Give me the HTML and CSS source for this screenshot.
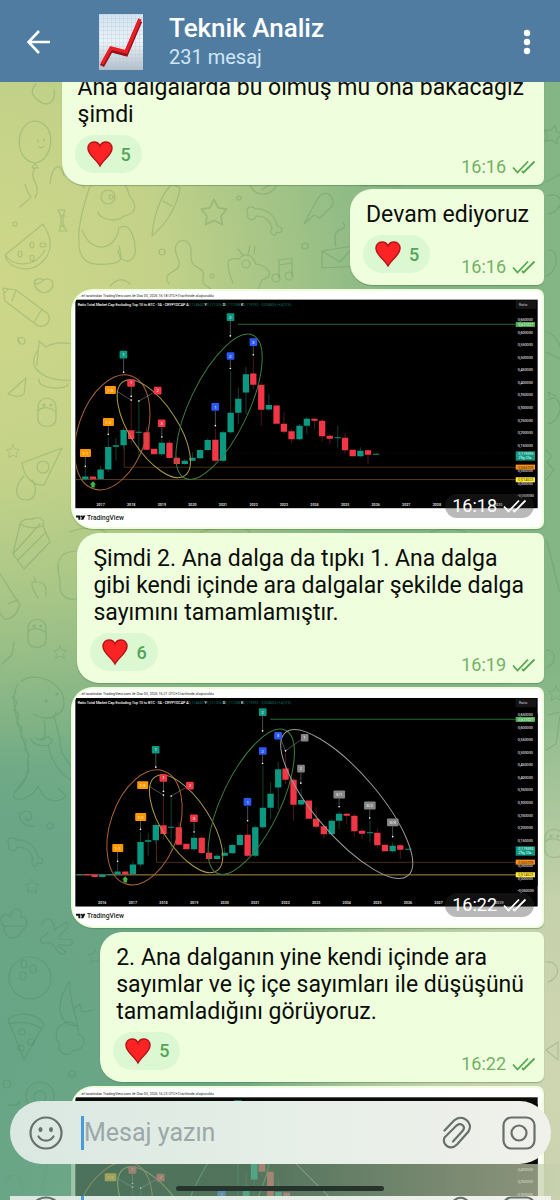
FILE: index.html
```html
<!DOCTYPE html>
<html lang="tr">
<head>
<meta charset="utf-8">
<meta name="viewport" content="width=device-width, initial-scale=1">
<title>Teknik Analiz</title>
<link rel="stylesheet" href="styles.css">
</head>
<body>
<svg class="defs" width="0" height="0" aria-hidden="true">
  <defs>
    <linearGradient id="paper" x1="0" y1="0" x2="0" y2="1"><stop offset="0" stop-color="#d3e3f0"/><stop offset=".5" stop-color="#edf3f5"/><stop offset="1" stop-color="#b4bfc8"/></linearGradient>
    <pattern id="grid" width="4" height="4" patternUnits="userSpaceOnUse"><path d="M0 0H4M0 0V4" stroke="#a9c6dc" stroke-width=".6" fill="none"/></pattern>
    <clipPath id="panel"><rect x="16" y="39" width="1390" height="627"/></clipPath>
    <symbol id="heart" viewBox="0 0 26 26"><path d="M13 25C10 19 1 14 1 7.500C1 3.500 3.500 1 7 1C10 1 12 2.500 13 5C14 2.500 16 1 19 1C22.500 1 25 3.500 25 7.500C25 14 16 19 13 25Z" fill="#fb2323" stroke="#b31317" stroke-width="1.400"/></symbol>
    <symbol id="checks" viewBox="0 0 24 14"><path d="M1 7.500L5.500 12.500L16 1.500M10 11L11.500 12.500L22.500 1.500" fill="none" stroke="currentColor" stroke-width="1.800"/></symbol>
    <symbol id="smile" viewBox="0 0 34 34"><circle cx="17" cy="17" r="15.500" fill="none" stroke="currentColor" stroke-width="2.200"/><ellipse cx="11.500" cy="13.500" rx="2" ry="2.500" fill="currentColor"/><ellipse cx="22" cy="13.500" rx="2" ry="2.500" fill="currentColor"/><path d="M9.500 20.500C13 26 21 26 24.500 20.500" fill="none" stroke="currentColor" stroke-width="2.200" stroke-linecap="round"/></symbol>
    <symbol id="clip" viewBox="0 0 30 34"><path d="M2.500 14.500L12 4.500C20-2.500 32 6 26.500 15.500L15 28.500C8.500 35 -.5 29 2.500 21.500L14.500 9.500C20 6 24 11 20.500 15L11 25.500" fill="none" stroke="currentColor" stroke-width="2.200" stroke-linecap="round"/></symbol>
    <symbol id="camera" viewBox="0 0 34 34"><rect x="1.500" y="1.500" width="31" height="31" rx="8" fill="none" stroke="currentColor" stroke-width="2.200"/><circle cx="17" cy="17" r="7.500" fill="none" stroke="currentColor" stroke-width="2.200"/></symbol>

    <g id="brand">
      <path d="M18 690H31V703H25V696H18ZM38 690H46L40 703H33Z" fill="#111"/><circle cx="34.500" cy="693" r="3" fill="#111"/>
      <text x="51" y="703" font-size="20" font-weight="500" fill="#222">TradingView</text>
    </g>
    <g id="symbolline" font-size="11">
      <text x="23" y="59" fill="#e8e8e8" stroke="#e8e8e8" stroke-width=".3">Ratio Total Market Cap Excluding Top 10 to BTC · 3A · CRYPTOCAP <tspan fill="#fff">A</tspan><tspan fill="#0c7465" stroke="none">0,114840</tspan> Y<tspan fill="#0c7465" stroke="none">0,121306</tspan> D<tspan fill="#0c7465" stroke="none">0,111208</tspan> K<tspan fill="#0c7465" stroke="none">0,119393 −0,004606 (+4,01%)</tspan></text>
      <rect x="1340" y="43" width="62" height="26" fill="#151515"/><text x="1350" y="60" fill="#ccc">Ratio</text>
    </g>
    <g id="scale" font-size="11" fill="#d5d5d5" stroke="#d5d5d5" stroke-width=".3">
      <text x="1346" y="104">0,650000</text><text x="1346" y="143">0,600000</text><text x="1346" y="181">0,550000</text><text x="1346" y="218">0,500000</text><text x="1346" y="257">0,450000</text><text x="1346" y="294">0,400000</text><text x="1346" y="332">0,350000</text><text x="1346" y="370">0,300000</text><text x="1346" y="408">0,250000</text><text x="1346" y="445">0,200000</text><text x="1346" y="483">0,150000</text><text x="1346" y="559">0,050000</text><text x="1346" y="597">0,000000</text><text x="1346" y="635">-0,050000</text>
      <g stroke="none" fill="#fff">
        <rect x="1340" y="108" width="58" height="15" fill="#4caf50"/><text x="1348" y="119">0,631027</text>
        <rect x="1340" y="497" width="58" height="28" fill="#0b9981"/><text x="1348" y="508">0,119393</text><text x="1348" y="521">29g 23s</text>
        <rect x="1340" y="537" width="58" height="15" fill="#f6921e"/><text x="1348" y="549" fill="#3a2000">0,065709</text>
        <rect x="1340" y="575" width="58" height="15" fill="#ffe93b"/><text x="1348" y="587" fill="#4a4300">0,014623</text>
      </g>
    </g>
    <g id="waves">
      <path d="M163 470V545H1340" stroke="#6e431d" stroke-width="2" fill="none"/>
      <path d="M18 582H1340" stroke="#80652f" stroke-width="2"/>
      <path d="M505 115H1340" stroke="#286733" stroke-width="3"/>
      <path d="M18 503H1340" stroke="#173b35" stroke-width="1" stroke-dasharray="2 3"/>
      <path d="M46 545V585M92 540V580M115 455V560M138 458V525M161 425V490M207 350V515M276 460V510M345 520V538M368 500V525M391 490V520M414 458V495M460 435V530M483 255V445M506 305V415M529 243V385M598 325V375M690 415V465M712 393V445M805 420V485M873 485V515" stroke="#1b5f51" stroke-width="2"/>
      <path d="M184 345V475M230 425V495M299 465V520M321 510V540M437 430V530M551 215V310M575 290V420M643 380V445M666 430V473M735 395V430M758 400V468M781 445V475M827 443V503M896 490V535" stroke="#73222d" stroke-width="2"/>
      <path d="M46 573V581M92 552V580M115 484V552M138 479V483M161 433V479M207 438V441M276 471V506M345 525V535M368 516V525M391 493V518M414 463V493M460 440V525M483 381V440M506 339V381M529 265V320M598 358V371M690 420V461M712 399V420M805 455V458M873 495V512M920 504V507" stroke="#0b9981" stroke-width="19"/>
      <path d="M69 573V581M184 434V460M230 440V492M253 489V506M299 471V517M321 516V535M437 462V525M551 263V297M575 297V372M621 359V414M643 414V438M666 437V461M735 399V405M758 405V452M781 450V459M827 456V494M850 492V512M896 494V507" stroke="#f23645" stroke-width="19"/>
      <g fill="none" stroke-width="3">
        <ellipse cx="127" cy="440" rx="103" ry="179" transform="rotate(18.700 127 440)" stroke="#a96536"/>
        <ellipse cx="252" cy="429" rx="72" ry="169" transform="rotate(-33 252 429)" stroke="#ad9b49"/>
        <ellipse cx="448" cy="363" rx="88" ry="238" transform="rotate(25.500 448 363)" stroke="#3d7d42"/>
      </g>
      <path d="M161 218V259M482 105V150M184 300V332M140 316L184 343M252 320L207 346M115 420V446M46 514V542M276 425V454M437 376V420M482 222V248" stroke="#999" stroke-width="1.500" fill="none"/>
      <g fill="#fff"><circle cx="161" cy="259" r="2.500"/><circle cx="482" cy="150" r="2.500"/><circle cx="184" cy="332" r="2.500"/><circle cx="184" cy="343" r="2.500"/><circle cx="207" cy="346" r="2.500"/><circle cx="115" cy="446" r="2.500"/><circle cx="46" cy="542" r="2.500"/><circle cx="276" cy="454" r="2.500"/><circle cx="437" cy="420" r="2.500"/><circle cx="482" cy="248" r="2.500"/></g>
      <path d="M69 587L78 597H74V606H64V597H60Z" fill="#43b94a"/>
      <g fill="#0b9981"><rect x="149" y="195" width="23" height="23" rx="3"/><rect x="471" y="82" width="23" height="23" rx="3"/></g>
      <g fill="#ff9800"><rect x="105" y="301" width="33" height="24" rx="3"/><rect x="99" y="397" width="33" height="24" rx="3"/><rect x="30" y="490" width="33" height="24" rx="3"/></g>
      <g fill="#f23645"><rect x="172" y="280" width="23" height="23" rx="3"/><rect x="252" y="303" width="23" height="23" rx="3"/><rect x="264" y="401" width="23" height="23" rx="3"/></g>
      <g fill="#2b59f5"><rect x="425" y="352" width="23" height="23" rx="3"/><rect x="471" y="199" width="23" height="23" rx="3"/></g>
      <g fill="#fff" font-size="13" text-anchor="middle"><text x="161" y="211">1</text><text x="482" y="99">2</text><text x="121" y="318">1-3</text><text x="115" y="414">1-2</text><text x="46" y="507">1-1</text><text x="184" y="296">1</text><text x="264" y="320">2</text><text x="276" y="418">3</text><text x="437" y="369">1</text><text x="482" y="215">2</text></g>
    </g>
  </defs>
</svg>

<div class="app">
  <svg class="doodles" viewBox="0 0 560 1200" preserveAspectRatio="xMinYMin slice" aria-hidden="true">
    <defs>
      <path id="star" d="M0-9L3-3L9-2L5 3L6 9L0 6L-6 9L-5 3L-9-2L-3-3Z"/>
      <path id="bone" d="M-16-6C-20-12-12-16-9-11C2-12 12-4 13 6C20 6 19 15 13 12C11 18 4 14 8 8C6 0 0-4-8-4C-10 2-18 0-16-6Z"/>
      <g id="gem"><path d="M-9-3C-9-16 9-16 9-3V8C9 18-9 18-9 8ZM-9 0C-4-5 4-4 9 1"/><circle cx="-3" cy="-6" r="1"/><circle cx="4" cy="-6" r="1"/></g>
      <g id="melon"><path d="M-23 9L15-22C24-8 25 5 15 15C4 28-20 24-23 9ZM-23 9C-14 22 8 21 17 4"/><ellipse cx="-8" cy="8" rx="2" ry="3"/><ellipse cx="4" cy="-1" rx="2" ry="3"/><ellipse cx="15" cy="-1" rx="3" ry="2"/><ellipse cx="4" cy="12" rx="2" ry="3"/></g>
      <g id="balloon"><path d="M0-21C22-20 20 18 0 21C-22 18-20-20 0-21ZM0 21L-3 26H3ZM0 26C-8 38 8 42 0 56"/><path d="M3-2V0M9-3V-1M4 5Q7 7 9 4"/></g>
      <g id="clef"><path d="M-5 10V-8L8-10V8M-5-3L8-5"/><circle cx="-8" cy="10" r="4"/><circle cx="5" cy="8" r="4"/></g>
      <g id="cake"><path d="M-17 18L-10-12C-6-20 2-15 5-18C11-20 15-15 13-10L20 6L-6 33ZM-17 18L10-12M-12 24L15-3M-10-12Q0-6 13-10"/></g>
      <path id="squig" d="M-14 20C-24 4 4 12-6-8C-14-26 10-30 8-10C6 8 24 0 20 14C18 24 30 22 28 28"/>
    </defs>
    <g class="doodles__ink">
      <use href="#balloon" x="35" y="142"/><path d="M36 84C28 92 34 98 42 103C50 106 56 100 54 90M50 184C52 166 60 160 64 176M25 184C30 205 38 190 20 207"/>
      <use href="#melon" x="28" y="246"/><path d="M58 210H65L63 216V226L67 231H59L61 226V216ZM60 216H65M60 226H65"/>
      <path d="M84 188C78 178 90 178 92 186M90 186C80 216 78 230 79 240C78 262 90 266 108 264C124 263 122 258 119 246M92 184C110 170 126 178 129 195C137 205 138 213 124 216C115 224 99 218 98 212M82 230C92 256 116 250 119 228M119 228C132 220 136 244 135 254C132 264 120 264 118 250"/><circle cx="108" cy="197" r="7"/><circle cx="111" cy="197" r="2"/>
      <path d="M152 236C154 210 164 190 173 184L180 188C177 206 168 222 152 236ZM163 201L172 206"/><use href="#star" transform="translate(214 212) scale(1.400)"/><use href="#bone" x="264" y="220"/><use href="#squig" x="183" y="264"/>
      <path d="M304 224L318 198C326 188 334 196 333 205L320 218L314 215ZM322 251L352 246L360 266L322 268ZM322 251L340 262L354 246M336 246C330 222 350 234 343 222M233 283C225 262 226 257 239 259C244 252 252 254 256 264C268 266 276 276 262 280L258 290M243 255L238 249M248 254L250 246M254 254L255 246"/><circle cx="246" cy="264" r="4"/><use href="#clef" x="284" y="268"/><circle cx="239" cy="198" r="2"/><circle cx="162" cy="252" r="3"/><circle cx="305" cy="246" r="3"/><circle cx="212" cy="276" r="2"/><circle cx="15" cy="224" r="2"/>
      <path d="M44 280C29 292 33 274 43 280C54 275 58 290 44 293C35 290 33 284 36 280M3 288L16 290L48 314C52 322 45 328 38 326L5 301ZM16 290L12 301M42 309L34 322M8 289L4 294M20 342C15 340 22 334 25 340C26 346 17 346 18 337M8 394L26 378L24 394C20 398 14 396 8 394M37 365L39 341L46 347C54 342 62 342 72 344M38 350C24 370 48 382 72 380M39 379C37 390 68 390 68 384"/>
      <use href="#gem" x="47" y="411"/><use href="#star" transform="translate(13 451) scale(.7)"/><path d="M22 463L62 448L44 485C34 486 24 478 22 463ZM24 476C14 486 14 500 26 500C36 500 38 488 32 480"/><circle cx="43" cy="467" r="6"/><use href="#cake" x="30" y="536"/>
      <path d="M38 598C30 586 30 580 37 582C48 582 46 592 46 596M36 582L34 577M0 574L20 605C16 616 10 620 4 619L0 613M8 604L18 600M76 551C56 552 56 566 60 580C58 596 68 602 78 598M14 642L12 655L2 664"/><use href="#gem" x="37" y="632"/><use href="#star" transform="translate(60 652) scale(.7)"/>
      <path d="M22 681C30 674 52 676 62 693C68 708 60 714 54 716L60 740C60 756 66 758 74 770M33 714C46 721 56 718 56 712M44 720C46 732 46 744 36 738M30 738C34 748 52 748 52 740C48 734 46 738 42 740M48 745C54 770 68 782 78 781M18 684C7 700 22 735 28 754C30 772 26 784 14 793C10 804 32 800 38 786C46 806 60 802 66 796L58 788M16 692L12 698L17 702L14 710L19 714L17 724L22 727L21 737L26 740L25 750L29 754L27 764L29 771L25 778L20 785L14 793"/><circle cx="46" cy="701" r="1"/><circle cx="57" cy="694" r="1"/>
      <path d="M34 826C15 826 16 808 30 812C36 820 24 824 26 817"/><use href="#bone" x="25" y="851"/><use href="#star" transform="translate(32 886) scale(.75)"/><circle cx="50" cy="826" r="3"/><path d="M4 927C-4 918 6 910 10 917C12 905 24 908 21 917C31 916 26 930 22 930C20 940 4 942 4 927ZM4 926H24M42 926C42 914 56 918 54 930L66 922C72 930 60 930 59 939L72 940C75 950 58 942 58 946L66 952C62 960 54 946 52 943L42 943C36 936 46 938 48 932"/>
      <circle cx="30" cy="978" r="21"/><ellipse cx="24" cy="964" rx="3" ry="4"/><ellipse cx="33" cy="969" rx="3" ry="4"/><ellipse cx="23" cy="976" rx="3" ry="4"/>
      <path d="M70 981C54 1004 58 1026 78 1026C76 1016 68 994 70 981ZM72 1010L80 1004L82 1012L94 1010M60 1026C70 1018 80 1024 78 1034C90 1038 82 1052 74 1050C66 1060 56 1050 60 1044C54 1038 56 1028 60 1026ZM8 1019C18 1012 36 1012 44 1024L24 1060ZM8 1024Q28 1019 42 1029"/><circle cx="22" cy="1032" r="3"/><circle cx="31" cy="1042" r="3"/><circle cx="21" cy="1048" r="3"/><circle cx="7" cy="1084" r="4"/><circle cx="72" cy="1074" r="3"/><circle cx="40" cy="1096" r="14"/><circle cx="40" cy="1097" r="6"/>
      <use href="#star" transform="translate(95 956) scale(.7)"/><path d="M8 1104Q14 1108 20 1102M25 1130Q60 1150 40 1190M5 1180Q20 1165 24 1196"/>
      <use href="#star" transform="translate(553 134) rotate(12)"/><path d="M546 182L560 174M547 196C564 190 566 210 548 214M548 250C562 250 556 274 546 276M546 332C556 334 562 346 562 360L546 352M548 400C562 390 566 420 548 424M550 396L548 392L556 396M546 450L552 456L547 462L554 470L546 480M546 540C556 570 556 590 566 604M546 650C556 650 558 662 546 668M548 715L560 712M546 750L556 744L560 716M546 962C560 960 562 978 548 982M546 1050L558 1042V1060Z"/><use href="#star" transform="translate(556 693) scale(.8)"/><use href="#gem" x="554" y="842"/>
      <path d="M250 184C254 198 272 196 276 186M262 190C270 182 276 186 282 180M110 286Q120 275 130 284M70 532Q90 524 106 532M200 532Q240 522 250 532M360 186H402M430 532Q450 526 466 532"/>
    </g>
  </svg>

  <header class="topbar">
    <button class="iconbtn topbar__back" aria-label="Geri"><svg width="24" height="24" viewBox="0 0 24 24"><path d="M23 12H2M12 1L1.500 12L12 23" fill="none" stroke="#fff" stroke-width="2.600"/></svg></button>
    <svg class="topbar__avatar" width="44" height="56" viewBox="0 0 44 56" role="img" aria-label="Grafik"><rect width="44" height="56" fill="url(#paper)"/><rect width="44" height="56" fill="url(#grid)"/><path d="M3 51L12 35L27 39L41 6" fill="none" stroke="#8e1219" stroke-width="4.500" transform="translate(0 1)"/><path d="M3 50L12 34L27 38L41 5" fill="none" stroke="#ec1c24" stroke-width="3.500"/></svg>
    <div class="topbar__text"><h1 class="topbar__title">Teknik Analiz</h1><p class="topbar__sub">231 mesaj</p></div>
    <button class="iconbtn topbar__more" aria-label="Menü"><svg width="8" height="26" viewBox="0 0 8 26" fill="#fff"><circle cx="4" cy="4" r="3.200"/><circle cx="4" cy="13" r="3.200"/><circle cx="4" cy="22" r="3.200"/></svg></button>
  </header>

  <main class="chat">
    <div class="messages">
      <article class="bubble">
        <p class="bubble__text">Ana dalgalarda bu olmuş mu ona bakacağız<br>şimdi</p>
        <div class="bubble__foot"><button class="react" aria-label="Kalp 5"><svg class="react__icon"><use href="#heart"/></svg><span>5</span></button><span class="stamp"><time>16:16</time><svg class="stamp__checks"><use href="#checks"/></svg></span></div>
      </article>
      <article class="bubble bubble--short">
        <p class="bubble__text">Devam ediyoruz</p>
        <div class="bubble__foot"><button class="react" aria-label="Kalp 5"><svg class="react__icon"><use href="#heart"/></svg><span>5</span></button><span class="stamp"><time>16:16</time><svg class="stamp__checks"><use href="#checks"/></svg></span></div>
      </article>
      <figure class="photo">
        <svg class="photo__img" viewBox="0 0 470 237" role="img" aria-label="TradingView grafiği">
          <g transform="translate(-3 -5) scale(.33333)">
            <rect x="16" y="41" width="1390" height="627" fill="#000"/>
            <text x="27" y="34" font-size="11" fill="#222">...el tarafından TradingView.com ile Oca 03, 2026 16:18 UTC+3 tarihinde oluşturuldu</text>
            <use href="#symbolline"/>
            <g clip-path="url(#panel)"><use href="#waves"/></g>
            <path d="M551 180V206" stroke="#999" stroke-width="1.500"/><circle cx="551" cy="207" r="2.500" fill="#fff"/>
            <rect x="540" y="157" width="23" height="23" rx="3" fill="#2b59f5"/><text x="551" y="173" font-size="13" fill="#fff" text-anchor="middle">3</text>
            <use href="#scale"/>
            <g font-size="11" font-weight="700" fill="#d8d8d8" text-anchor="middle"><text x="92" y="661">2017</text><text x="184" y="661">2018</text><text x="276" y="661">2019</text><text x="368" y="661">2020</text><text x="460" y="661">2021</text><text x="552" y="661">2022</text><text x="643" y="661">2023</text><text x="735" y="661">2024</text><text x="827" y="661">2025</text><text x="919" y="661">2026</text><text x="1011" y="661">2027</text><text x="1103" y="661">2028</text><text x="1287" y="661">2030</text></g>
            <use href="#brand"/>
          </g>
        </svg>
        <figcaption class="stamp stamp--over"><time>16:18</time><svg class="stamp__checks"><use href="#checks"/></svg></figcaption>
      </figure>
      <article class="bubble">
        <p class="bubble__text">Şimdi 2. Ana dalga da tıpkı 1. Ana dalga<br>gibi kendi içinde ara dalgalar şekilde dalga<br>sayımını tamamlamıştır.</p>
        <div class="bubble__foot"><button class="react" aria-label="Kalp 6"><svg class="react__icon"><use href="#heart"/></svg><span>6</span></button><span class="stamp"><time>16:19</time><svg class="stamp__checks"><use href="#checks"/></svg></span></div>
      </article>
      <figure class="photo">
        <svg class="photo__img" viewBox="0 0 470 237" role="img" aria-label="TradingView grafiği">
          <g transform="translate(-3 -4) scale(.33333)">
            <rect x="16" y="39" width="1390" height="627" fill="#000"/>
            <text x="27" y="31" font-size="11" fill="#222">...el tarafından TradingView.com ile Oca 03, 2026 16:21 UTC+3 tarihinde oluşturuldu</text>
            <use href="#symbolline" y="-2"/>
            <g clip-path="url(#panel)">
              <path d="M18 571H1340" stroke="#a9905a" stroke-width="2.500"/>
              <use href="#waves" x="97" y="-12"/>
            </g>
            <path d="M52 568V571M74 570V577" stroke="#f23645" stroke-width="19"/><path d="M30 569V571M97 570V577M120 569V571" stroke="#0b9981" stroke-width="19"/>
            <ellipse cx="832" cy="358" rx="95" ry="283" transform="rotate(-40.700 832 358)" fill="none" stroke="#9a9a9a" stroke-width="3"/>
            <path d="M634 164L648 198L697 163M694 264V295M809 341V366M901 374V400M970 425V456" fill="none" stroke="#999" stroke-width="1.500"/>
            <g fill="#fff"><circle cx="648" cy="198" r="2.500"/><circle cx="694" cy="295" r="2.500"/><circle cx="809" cy="366" r="2.500"/><circle cx="901" cy="400" r="2.500"/><circle cx="970" cy="456" r="2.500"/></g>
            <rect x="614" y="141" width="23" height="23" rx="3" fill="#2b59f5"/>
            <g fill="#858585"><rect x="694" y="147" width="23" height="23" rx="3"/><rect x="683" y="240" width="23" height="23" rx="3"/><rect x="792" y="317" width="35" height="24" rx="3"/><rect x="884" y="350" width="35" height="24" rx="3"/><rect x="953" y="401" width="35" height="24" rx="3"/></g>
            <g fill="#fff" font-size="13" text-anchor="middle"><text x="625" y="157">3</text><text x="705" y="163">1</text><text x="694" y="256">2</text><text x="809" y="334">3/1</text><text x="901" y="367">3/2</text><text x="970" y="418">3/3</text></g>
            <rect x="1341" y="85" width="65" height="520" fill="#000"/>
            <use href="#scale" y="-12"/>
            <g font-size="11" font-weight="700" fill="#d8d8d8" text-anchor="middle"><text x="97" y="659">2016</text><text x="189" y="659">2017</text><text x="281" y="659">2018</text><text x="373" y="659">2019</text><text x="465" y="659">2020</text><text x="557" y="659">2021</text><text x="648" y="659">2022</text><text x="740" y="659">2023</text><text x="832" y="659">2024</text><text x="924" y="659">2025</text><text x="1016" y="659">2026</text><text x="1108" y="659">2027</text><text x="1291" y="659">2029</text></g>
            <use href="#brand" y="-2"/>
          </g>
        </svg>
        <figcaption class="stamp stamp--over"><time>16:22</time><svg class="stamp__checks"><use href="#checks"/></svg></figcaption>
      </figure>
      <article class="bubble">
        <p class="bubble__text">2. Ana dalganın yine kendi içinde ara<br>sayımlar ve iç içe sayımları ile düşüşünü<br>tamamladığını görüyoruz.</p>
        <div class="bubble__foot"><button class="react" aria-label="Kalp 5"><svg class="react__icon"><use href="#heart"/></svg><span>5</span></button><span class="stamp"><time>16:22</time><svg class="stamp__checks"><use href="#checks"/></svg></span></div>
      </article>
      <figure class="photo">
        <svg class="photo__img" viewBox="0 0 470 237" role="img" aria-label="TradingView grafiği">
          <g transform="translate(-3 -4) scale(.33333)">
            <rect x="16" y="40" width="1390" height="627" fill="#0b0b09"/>
            <text x="27" y="32" font-size="11" fill="#222">...el tarafından TradingView.com ile Oca 03, 2026 16:23 UTC+3 tarihinde oluşturuldu</text>
            <g transform="translate(-7 -33) scale(1.060 1)"><use href="#waves"/></g>
            <path d="M560 120L1000 560" stroke="#9a9a9a" stroke-width="3"/>
            <rect x="1341" y="60" width="65" height="540" fill="#0b0b09"/>
            <use href="#scale" y="-33"/>
          </g>
        </svg>
      </figure>
    </div>
  </main>

  <footer class="dock">
    <form class="composer">
      <button type="button" class="iconbtn" aria-label="Emoji"><svg width="34" height="34"><use href="#smile"/></svg></button>
      <span class="composer__caret"></span>
      <input class="composer__input" type="text" placeholder="Mesaj yazın" aria-label="Mesaj yazın">
      <button type="button" class="iconbtn" aria-label="Dosya ekle"><svg width="30" height="34"><use href="#clip"/></svg></button>
      <button type="button" class="iconbtn composer__cam" aria-label="Kamera"><svg width="34" height="34"><use href="#camera"/></svg></button>
    </form>
    <div class="dock__nav"><span class="dock__handle"></span></div>
    <div class="dock__edge" aria-hidden="true">
      <svg width="34" height="34"><use href="#smile"/></svg>
      <span class="composer__caret"></span>
      <span class="dock__fill"></span>
      <svg width="30" height="34"><use href="#clip"/></svg>
      <svg class="composer__cam" width="34" height="34"><use href="#camera"/></svg>
    </div>
  </footer>
</div>
</body>
</html>
```
FILE: styles.css
```css
* { box-sizing: border-box; }
html, body { height: 100%; }
body { margin: 0; font-family: Roboto, "Noto Sans", sans-serif; }
h1, p, figure { margin: 0; }
button { border: 0; padding: 0; background: none; font: inherit; color: inherit; cursor: pointer; }
svg { display: block; }
.defs { position: absolute; }

.app {
  position: relative;
  display: flex;
  flex-direction: column;
  height: 100vh;
  overflow: hidden;
  background:
    radial-gradient(ellipse 72% 40% at 0% 24%, #ced789 0%, rgba(206, 215, 137, .85) 40%, rgba(206, 215, 137, 0) 100%),
    radial-gradient(ellipse 60% 34% at 104% 90%, #d0d6b2 0%, rgba(208, 214, 178, .85) 45%, rgba(208, 214, 178, 0) 100%),
    radial-gradient(ellipse 70% 40% at 0% 88%, #68a586 0%, #6ba786 50%, rgba(107, 167, 134, 0) 100%),
    #84b685;
}
.doodles { position: absolute; inset: 0; width: 100%; height: 100%; }
.doodles__ink { fill: none; stroke: #3c7846; stroke-opacity: .22; stroke-width: 1.2; stroke-linejoin: round; stroke-linecap: round; }

.topbar {
  position: relative;
  z-index: 2;
  display: flex;
  align-items: center;
  flex: none;
  height: 82px;
  padding: 2px 29px 0 27px;
  background: #507ca1;
  color: #fff;
}
.iconbtn { display: flex; flex: none; align-items: center; justify-content: center; }
.topbar__avatar { flex: none; margin-left: 48px; }
.topbar__text { flex: 1; min-width: 0; margin-left: 26px; }
.topbar__title { font-size: 26px; line-height: 30px; font-weight: 500; }
.topbar__sub { font-size: 20px; line-height: 28px; color: #cfe6f8; }

.chat { position: relative; flex: 1; min-height: 0; overflow: hidden; }
.messages { display: flex; flex-direction: column; align-items: flex-end; gap: 4px; margin-top: -20px; padding: 0 16px; }

.bubble, .photo { border-radius: 22px 7px 7px 22px; background: #efffde; box-shadow: 0 1px 1px rgba(60, 110, 60, .4); }
.bubble { max-width: 100%; padding: 12px 8px 6px 12px; }
.bubble__text { padding: 0 12px 0 4px; font-size: 23px; line-height: 27px; color: #0b0d09; }
.bubble--short .bubble__text { padding-right: 7px; }
.bubble__foot { display: flex; justify-content: space-between; align-items: flex-end; margin: 7px 0 0 1px; }
.react {
  display: flex;
  align-items: center;
  gap: 8px;
  height: 38px;
  margin-bottom: 6px;
  padding: 0 11px 0 12px;
  border-radius: 19px;
  background: #dcf8d2;
  font-size: 18px;
  font-weight: 500;
  color: #54a458;
}
.react__icon { width: 26px; height: 28px; }
.stamp { display: flex; align-items: center; gap: 6px; font-size: 18px; line-height: 24px; color: #72b163; }
.stamp__checks { width: 24px; height: 14px; }
.bubble .stamp__checks { color: #55a74f; }

.photo { position: relative; width: 90%; max-width: 473px; padding: 2px; overflow: hidden; }
.photo__img { width: 100%; height: auto; border-radius: 20px 6px 6px 20px; background: #fff; }
.stamp--over {
  position: absolute;
  right: 10px;
  bottom: 11px;
  padding: 0 7px;
  border-radius: 12px;
  background: rgba(50, 50, 50, .34);
  color: #fff;
}

.dock { position: absolute; left: 0; right: 0; bottom: 0; z-index: 2; }
.composer, .dock__edge { display: flex; color: #68706c; background: linear-gradient(90deg, #dae8e1, #e5eee7 50%, #f1f1eb); }
.composer { align-items: center; height: 63px; margin: 0 9px 0 10px; padding: 0 15px 0 19px; border-radius: 32px; }
.composer__caret { flex: none; width: 3px; height: 34px; margin-left: 18px; background: #4b9bdc; }
.composer__input { flex: 1; min-width: 0; height: 40px; padding: 0; border: 0; outline: 0; background: none; font: 25px/40px Roboto, "Noto Sans", sans-serif; color: #222; }
.composer__input::placeholder { color: #9aa8a8; opacity: 1; }
.composer__cam { margin-left: 30px; }
.dock__nav {
  display: flex;
  justify-content: center;
  height: 32px;
  padding-top: 22px;
  background: linear-gradient(90deg, rgba(104, 165, 134, .66), rgba(120, 170, 135, .66) 45%, rgba(200, 208, 174, .7));
}
.dock__handle { width: 37%; height: 5px; border-radius: 3px; background: #25352d; }
.dock__edge { height: 4px; margin: 0 9px 0 10px; padding: 0 15px 0 19px; overflow: hidden; align-items: flex-start; }
.dock__fill { flex: 1; }
```
